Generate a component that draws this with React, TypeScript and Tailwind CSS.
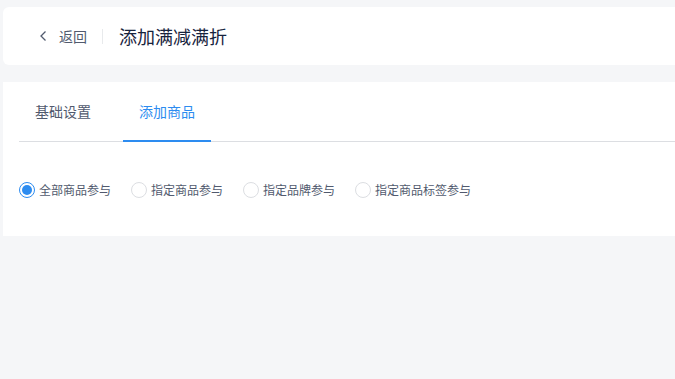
import { useState } from "react";

const options = ["全部商品参与", "指定商品参与", "指定品牌参与", "指定商品标签参与"];

export default function App() {
  const [tab, setTab] = useState(1);
  const [scope, setScope] = useState(0);

  return (
    <div
      className="min-h-[379px] w-[675px] overflow-hidden bg-[#f5f6f8] pl-[3px] pt-[7px]"
      style={{ fontFamily: '"Noto Sans CJK SC", "Noto Sans", sans-serif' }}
    >
      {/* header */}
      <div className="flex h-[58px] w-[700px] items-center rounded-l-md bg-white pl-[36px]">
        <button className="flex items-center text-[#515a6e]">
          <svg width="10" height="12" viewBox="0 0 10 12" fill="none" className="mr-[10px]">
            <path d="M6.5 1.5 L2 6 L6.5 10.5" stroke="#515a6e" strokeWidth="1.3" />
          </svg>
          <span className="text-sm leading-5">返回</span>
        </button>
        <div className="ml-[15px] mr-4 h-[15px] w-px bg-[#e8eaec]" />
        <h1 className="text-lg leading-6 text-[#17233d]">添加满减满折</h1>
      </div>

      {/* content */}
      <div className="mt-[17px] h-[154px] w-[700px] bg-white pl-4 pt-4">
        <div className="flex border-b border-[#dcdee2]">
          {["基础设置", "添加商品"].map((t, i) => (
            <button
              key={t}
              onClick={() => setTab(i)}
              className={
                "-mb-px mr-4 border-b-2 px-4 pb-[19px] pt-[3px] text-sm leading-5 " +
                (tab === i ? "border-[#2d8cf0] text-[#2d8cf0]" : "border-transparent text-[#515a6e]")
              }
            >
              {t}
            </button>
          ))}
        </div>

        <div className="mt-[38px] flex items-center">
          {options.map((o, i) => (
            <label
              key={o}
              onClick={() => setScope(i)}
              className="mr-[20px] flex cursor-pointer items-center text-xs leading-5 text-[#515a6e]"
            >
              <span
                className={
                  "mr-[4px] flex h-[16px] w-[16px] items-center justify-center rounded-full border " +
                  (scope === i ? "border-[#2d8cf0]" : "border-[#dcdee2]")
                }
              >
                {scope === i && <span className="h-[10px] w-[10px] rounded-full bg-[#2d8cf0]" />}
              </span>
              {o}
            </label>
          ))}
        </div>
      </div>
    </div>
  );
}
